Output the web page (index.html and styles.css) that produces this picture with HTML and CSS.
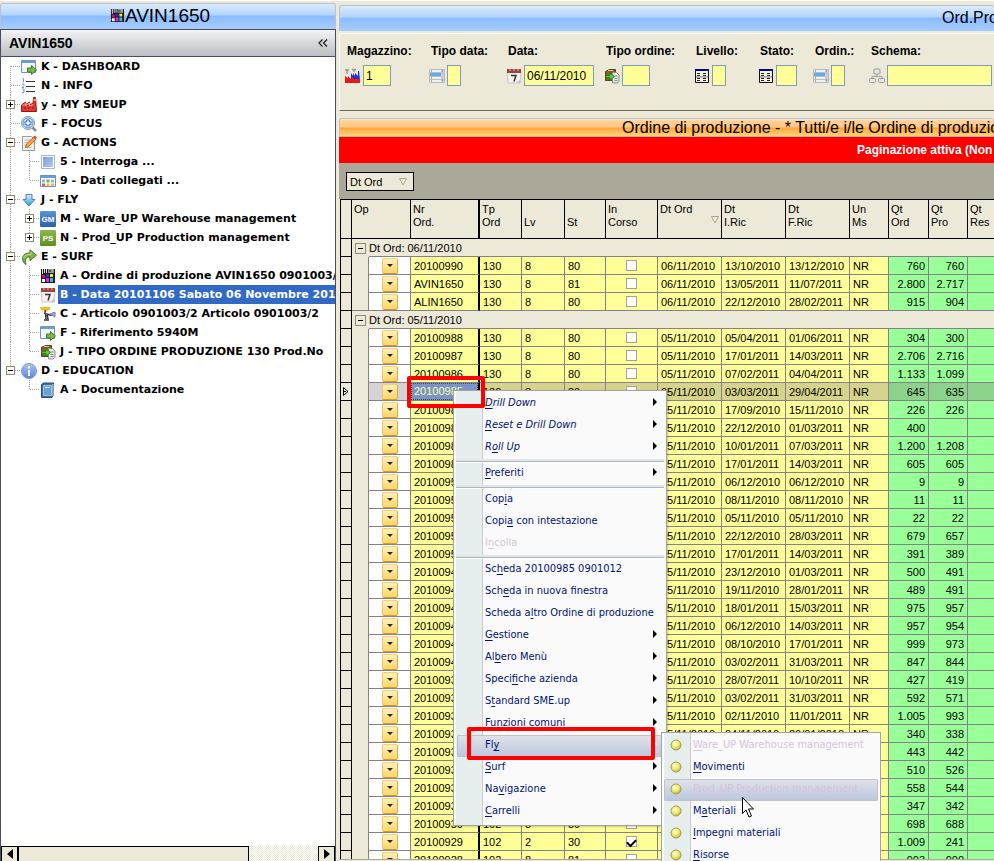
FILE: index.html
```html
<!DOCTYPE html>
<html lang="it">
<head>
<meta charset="utf-8">
<title>AVIN1650</title>
<link rel="stylesheet" href="styles.css">
</head>
<body>
<svg class="sprite" aria-hidden="true">
  <defs>
    <linearGradient id="g-blue" x1="0" y1="0" x2="1" y2="1"><stop offset="0" stop-color="#7b9fdd"/><stop offset="1" stop-color="#b4c9ee"/></linearGradient>
    <linearGradient id="g-gm" x1="0" y1="0" x2="0" y2="1"><stop offset="0" stop-color="#5a95d6"/><stop offset="1" stop-color="#2a62ac"/></linearGradient>
    <linearGradient id="g-ps" x1="0" y1="0" x2="0" y2="1"><stop offset="0" stop-color="#8db84a"/><stop offset="1" stop-color="#5d8f24"/></linearGradient>
    <radialGradient id="g-ball" cx=".4" cy=".35" r=".7"><stop offset="0" stop-color="#ffffc8"/><stop offset=".6" stop-color="#eee468"/><stop offset="1" stop-color="#b5a642"/></radialGradient>
    <linearGradient id="g-info" x1="0" y1="0" x2="0" y2="1"><stop offset="0" stop-color="#a9c4f3"/><stop offset="1" stop-color="#5b87d8"/></linearGradient>
    <linearGradient id="g-down" x1="0" y1="0" x2="0" y2="1"><stop offset="0" stop-color="#d5f2ff"/><stop offset="1" stop-color="#1f9be6"/></linearGradient>
  </defs>
  <symbol id="i-window" viewBox="0 0 16 16">
    <path d="M.5 1.500h14v12H.5z" fill="#f4f8fc" stroke="#7394c2"/><path d="M1 2h13v2H1z" fill="#6c9ce0"/>
    <path d="M6.500 9h4V6.500l5 4.500-5 4.500V13h-4z" fill="#7ab648" stroke="#3f7a22"/>
  </symbol>
  <symbol id="i-list" viewBox="0 0 16 16">
    <path d="M5 3.500h9M5 8.500h9M5 13.500h9" stroke="#333"/>
    <path d="M1.500 1l1-.5V4.500M1 6h2v1.500L1 9.500h2M1 11h2v1.500H2h1v2H1" fill="none" stroke="#6d9fe4"/>
  </symbol>
  <symbol id="i-factory" viewBox="0 0 16 16">
    <path d="M.5 14.500V8l4-3v2.500l4-2.500v2.500L12 6.500l.5-6h2l1 14z" fill="#dd3a33" stroke="#9c1414"/>
    <path d="M1.500 8.500l3-2v2l4-2.500v3l3.500-1.500" fill="none" stroke="#ffaaa0"/><path d="M3 11h2M7 11h2M11 11h2" stroke="#8c1111"/><path d="M12.500 3h2.500" stroke="#fff"/>
  </symbol>
  <symbol id="i-focus" viewBox="0 0 16 16">
    <path d="M11 11l4 4" stroke="#8a8a8a" stroke-width="2.500"/><circle cx="7" cy="7" r="6.500" fill="#dceafb" stroke="#8f98a3"/>
    <circle cx="7" cy="7" r="5" fill="none" stroke="#5e93d6"/><path d="M7 3.500v7M3.500 7h7" stroke="#3a74c4" stroke-width="3.500"/><path d="M7 4.500v5M4.500 7h5" stroke="#fff" stroke-width="1.500"/>
  </symbol>
  <symbol id="i-edit" viewBox="0 0 16 16">
    <path d="M1.500 1.500h9l3 3v11h-12z" fill="#f0f0ee" stroke="#9a9a98"/><path d="M3.500 5h6M3.500 7.500h5M3.500 10h3M3.500 12.500h7" stroke="#b9b9b7"/>
    <path d="M4.500 12.500l1-3.500L13 2l2 2.300-7.500 7.200z" fill="#f6a540" stroke="#b9691b"/><path d="M12 2l2-1.500 2 2-1.500 1.800z" fill="#e84a3c"/>
  </symbol>
  <symbol id="i-square" viewBox="0 0 16 16"><path d="M1.500 1.500h13v13h-13z" fill="#fff" stroke="#9db8e3"/><path d="M3 3h10v10H3z" fill="url(#g-blue)"/></symbol>
  <symbol id="i-grid" viewBox="0 0 16 16">
    <path d="M.5 2.500h15v11H.5z" fill="#fff" stroke="#6a90c8"/><path d="M1 3h14v2H1z" fill="#6c9ce0"/>
    <path d="M2 6.500h3v3H2z" fill="#8eb4e8"/><path d="M6.500 6.500h3v3h-3z" fill="#6fb24a"/><path d="M11 6.500h3v3h-3z" fill="#8eb4e8"/><path d="M2 10.500h3v2.500H2z" fill="#e25b45"/><path d="M6.500 10.500h3v2.500h-3zM11 10.500h3v2.500h-3z" fill="#f1b552"/>
  </symbol>
  <symbol id="i-down" viewBox="0 0 16 16"><path d="M5 2.500h6v5h3L8 14 2 7.500h3z" fill="url(#g-down)" stroke="#5f7fa8"/></symbol>
  <symbol id="i-gm" viewBox="0 0 16 16"><rect width="16" height="16" rx="1" fill="url(#g-gm)"/><text x="8" y="11" class="badge">GM</text></symbol>
  <symbol id="i-ps" viewBox="0 0 16 16"><rect width="16" height="16" rx="1" fill="url(#g-ps)"/><text x="8" y="11" class="badge">PS</text></symbol>
  <symbol id="i-surf" viewBox="0 0 16 16"><path d="M5 15.500C-.5 12 .5 3.500 9 4V.8l6.500 5.400L9 11.500V8C5.500 7.500 3.500 10 5 15.500z" fill="#83b544" stroke="#44761c"/><path d="M2.500 9C3.500 6 6 5.200 10 5.500V3" fill="none" stroke="#c7e39b"/></symbol>
  <symbol id="i-order" viewBox="0 0 16 16">
    <path d="M1 1h14v14H1z" fill="#1a1a1a"/><path d="M2 1h1v5H2zM4 1h1v4H4zM6 1h1v4H6z" fill="#ddd"/><path d="M8 1h6v4H8z" fill="#9a9a9a"/><path d="M9 2h2v2H9z" fill="#555"/>
    <path d="M2 7h3v3H2z" fill="#c8106c"/><path d="M6 6h3v3H6z" fill="#2033e0"/><path d="M10 6h3v3h-3z" fill="#fff200"/><path d="M2 11h3v3H2z" fill="#fff"/><path d="M6 10h3v4H6z" fill="#ff1ae0"/><path d="M10 10h3v4h-3z" fill="#19c9e8"/>
  </symbol>
  <symbol id="i-date" viewBox="0 0 16 16">
    <path d="M1 3h14l-1 12H2z" fill="#f4f1ef" stroke="#d0c8c4"/><path d="M1 1h14v4H1z" fill="#a04038"/><path d="M3 2h2M7 2h2M11 2h2" stroke="#e5bcb6"/><path d="M5 7.500h5L8 13.500" fill="none" stroke="#333" stroke-width="1.500"/><path d="M10 15l5-4v4z" fill="#c9c4c0"/>
  </symbol>
  <symbol id="i-item" viewBox="0 0 16 16">
    <path d="M0 1h10v3H8L7 6 5 4H3L2 6z" fill="#f3bc22"/><path d="M5 4l1 9M4 7l6 2h4M4 14h5M7 8l1 5" stroke="#333" stroke-width="1.500" fill="none"/><path d="M10 8l5-2v5zM5 6l2 3" fill="#97a9d9" stroke="#6d80bb"/>
  </symbol>
  <symbol id="i-type" viewBox="0 0 16 16">
    <path d="M1.500 3.500l4-2h6v11h-10z" fill="#8b5b22" stroke="#5e3f1c"/><path d="M4 2.500h5" stroke="#d9c9a0"/><path d="M8.500 4.500h4l2.500 2.500v6.500L13 15H8.500z" fill="#e8e8e6" stroke="#8b8b89"/><path d="M10.500 8h3M10.500 10.500h3M10.500 12.500h3" stroke="#888"/>
    <path d="M2 7.500h4V5l4.500 3.500L6 12V9.500H2z" fill="#4ad838" stroke="#1f8a1e"/>
  </symbol>
  <symbol id="i-info" viewBox="0 0 16 16"><circle cx="8" cy="8" r="7.500" fill="url(#g-info)" stroke="#7d9dd8"/><path d="M8 3v2.500M8 7v6" stroke="#fff" stroke-width="2"/></symbol>
  <symbol id="i-book" viewBox="0 0 16 16"><path d="M1.500 2.500l2-1.500h10v12l-1.500 2.500H1.500z" fill="#39729f" stroke="#24506f"/><path d="M3.500 3.500h8v10h-8z" fill="#6c9fd0" stroke="#9cc1e2"/><path d="M5 5.500h5" stroke="#d6e6f4"/><path d="M13 2v12" stroke="#dfe8f1"/></symbol>
  <symbol id="i-plant" viewBox="0 0 16 16"><path d="M6 12V5l2 3V5l2 3V5l3 3V3h1l1 9z" fill="#1636d2"/><path d="M0 15V8l3 2V8l3 3 2-2 1 2h6v4z" fill="#e81818"/><path d="M0 2h4M7 1.500h4M2 1v5M9 1v3" stroke="#999" stroke-width="1.500"/></symbol>
  <symbol id="i-combo" viewBox="0 0 16 16"><path d="M.5 1.500h15v13H.5z" fill="#f1f1f1" stroke="#b8bdc2"/><path d="M1 5h11v3H1z" fill="#5faee8"/><path d="M1 4.500h11M1 8.500h11M1 11.500h11" stroke="#b7bec4"/><path d="M12 2h3v12h-3z" fill="#c8ccd0"/><path d="M13 3h1M13 12h1M2 3h1M2 10h1M2 13h1" stroke="#666"/></symbol>
  <symbol id="i-table" viewBox="0 0 16 16"><path d="M1.500 1.500h13v13h-13z" fill="#f4f2e8" stroke="#111"/><path d="M1 1h14v2H1z" fill="#000a8c"/><path d="M3 5.500h4M9 5.500h4M3 7.500h4M9 7.500h4M3 10.500h4M9 10.500h4M3 12.500h4M9 12.500h4" stroke="#222" stroke-dasharray="3 1"/><path d="M2 9h12" stroke="#777"/></symbol>
  <symbol id="i-schema" viewBox="0 0 16 16"><path d="M8 6v3M3 11V8.500h10V11" fill="none" stroke="#a3a3a3"/><g fill="#e6e6e6" stroke="#9a9a9a"><rect x="5" y="1" width="6" height="5" rx="1"/><rect x=".5" y="10.500" width="6" height="4" rx="1"/><rect x="9.500" y="10.500" width="6" height="4" rx="1"/></g></symbol>
  <symbol id="i-ball" viewBox="0 0 12 12"><circle cx="6" cy="6" r="5" fill="url(#g-ball)" stroke="#a39c52"/></symbol>
</svg>

<aside class="sidebar">
  <header class="caption caption-object"><svg class="caption-icon"><use href="#i-order"/></svg><span>AVIN1650</span></header>
  <section class="panel">
    <div class="panel-title"><h2>AVIN1650</h2><button class="collapse" type="button" aria-label="Comprimi"><svg viewBox="0 0 10 8"><path d="M4.500 .5L1 4l3.500 3.500M9 .5L5.500 4 9 7.500" /></svg></button></div>
    <ul class="tree">
      <li><i class="guide start"></i><svg class="icon"><use href="#i-window"/></svg><span>K - DASHBOARD</span></li>
      <li><i class="guide tee"></i><svg class="icon"><use href="#i-list"/></svg><span>N - INFO</span></li>
      <li><i class="guide tee"><button class="box plus" type="button" aria-label="Espandi"></button></i><svg class="icon"><use href="#i-factory"/></svg><span>y - MY SMEUP</span></li>
      <li><i class="guide tee"></i><svg class="icon"><use href="#i-focus"/></svg><span>F - FOCUS</span></li>
      <li><i class="guide tee"><button class="box" type="button" aria-label="Comprimi"></button></i><svg class="icon"><use href="#i-edit"/></svg><span>G - ACTIONS</span></li>
      <li><i class="guide line"></i><i class="guide tee"></i><svg class="icon"><use href="#i-square"/></svg><span>5 - Interroga ...</span></li>
      <li><i class="guide line"></i><i class="guide end"></i><svg class="icon"><use href="#i-grid"/></svg><span>9 - Dati collegati ...</span></li>
      <li><i class="guide tee"><button class="box" type="button" aria-label="Comprimi"></button></i><svg class="icon"><use href="#i-down"/></svg><span>J - FLY</span></li>
      <li><i class="guide line"></i><i class="guide tee"><button class="box plus" type="button" aria-label="Espandi"></button></i><svg class="icon"><use href="#i-gm"/></svg><span>M - Ware_UP Warehouse management</span></li>
      <li><i class="guide line"></i><i class="guide end"><button class="box plus" type="button" aria-label="Espandi"></button></i><svg class="icon"><use href="#i-ps"/></svg><span>N - Prod_UP Production management</span></li>
      <li><i class="guide tee"><button class="box" type="button" aria-label="Comprimi"></button></i><svg class="icon"><use href="#i-surf"/></svg><span>E - SURF</span></li>
      <li><i class="guide line"></i><i class="guide tee"></i><svg class="icon"><use href="#i-order"/></svg><span>A - Ordine di produzione AVIN1650 0901003/2</span></li>
      <li class="selected"><i class="guide line"></i><i class="guide tee"></i><svg class="icon"><use href="#i-date"/></svg><span>B - Data 20101106 Sabato 06 Novembre 2010</span></li>
      <li><i class="guide line"></i><i class="guide tee"></i><svg class="icon"><use href="#i-item"/></svg><span>C - Articolo 0901003/2 Articolo 0901003/2</span></li>
      <li><i class="guide line"></i><i class="guide tee"></i><svg class="icon"><use href="#i-window"/></svg><span>F - Riferimento 5940M</span></li>
      <li><i class="guide line"></i><i class="guide end"></i><svg class="icon"><use href="#i-type"/></svg><span>J - TIPO ORDINE PRODUZIONE 130 Prod.No</span></li>
      <li><i class="guide end"><button class="box" type="button" aria-label="Comprimi"></button></i><svg class="icon"><use href="#i-info"/></svg><span>D - EDUCATION</span></li>
      <li><i class="guide"></i><i class="guide end"></i><svg class="icon"><use href="#i-book"/></svg><span>A - Documentazione</span></li>
    </ul>
    <div class="scrollbar">
      <button type="button" aria-label="Scorri a sinistra"><svg viewBox="0 0 6 10"><path d="M6 0v10L0 5z"/></svg></button>
      <div class="thumb"></div><div class="track"></div>
      <button type="button" aria-label="Scorri a destra"><svg viewBox="0 0 6 10"><path d="M0 0v10l6-5z"/></svg></button>
    </div>
  </section>
</aside>

<main class="main">
  <header class="caption caption-main"><span>Ord.Prod.</span></header>
  <form class="filters">
    <div class="field"><label for="f-mag">Magazzino:</label><div><svg class="icon"><use href="#i-plant"/></svg><input id="f-mag" class="w28" value="1"></div></div>
    <div class="field"><label for="f-tdata">Tipo data:</label><div><svg class="icon"><use href="#i-combo"/></svg><input id="f-tdata" class="w14"></div></div>
    <div class="field"><label for="f-data">Data:</label><div><svg class="icon"><use href="#i-date"/></svg><input id="f-data" class="w70" value="06/11/2010"></div></div>
    <div class="field"><label for="f-tord">Tipo ordine:</label><div><svg class="icon"><use href="#i-type"/></svg><input id="f-tord" class="w28"></div></div>
    <div class="field"><label for="f-liv">Livello:</label><div><svg class="icon"><use href="#i-table"/></svg><input id="f-liv" class="w14"></div></div>
    <div class="field"><label for="f-stato">Stato:</label><div><svg class="icon"><use href="#i-table"/></svg><input id="f-stato" class="w21"></div></div>
    <div class="field"><label for="f-ord">Ordin.:</label><div><svg class="icon"><use href="#i-combo"/></svg><input id="f-ord" class="w14"></div></div>
    <div class="field"><label for="f-schema">Schema:</label><div><svg class="icon"><use href="#i-schema"/></svg><input id="f-schema" class="w105"></div></div>
  </form>
  <header class="caption caption-list"><span>Ordine di produzione - * Tutti/e i/le Ordine di produzione</span></header>
  <p class="notice">Paginazione attiva (Non</p>
  <div class="groupbar"><button type="button">Dt Ord <svg class="sort" viewBox="0 0 8 8"><path d="M.5 .5h7L4 7z"/></svg></button></div>
  <div class="grid-wrap">
    <table class="grid">
      <colgroup><col class="c-ind"><col class="c-gap"><col class="c-op"><col class="c-nr"><col class="c-tp"><col class="c-lv"><col class="c-st"><col class="c-in"><col class="c-dt"><col class="c-dt"><col class="c-dt"><col class="c-un"><col class="c-qo"><col class="c-qp"><col class="c-qr"></colgroup>
      <thead><tr>
        <th class="ind"></th><th colspan="2">Op</th><th class="nr">Nr<br>Ord.</th><th>Tp<br>Ord</th><th><br>Lv</th><th><br>St</th><th>In<br>Corso</th>
        <th>Dt Ord<svg class="sort" viewBox="0 0 8 8"><path d="M.5 .5h7L4 7z"/></svg></th><th>Dt<br>I.Ric</th><th>Dt<br>F.Ric</th><th>Un<br>Ms</th><th>Qt<br>Ord</th><th>Qt<br>Pro</th><th>Qt<br>Res</th>
      </tr></thead>
      <tbody id="rows"></tbody>
    </table>
  </div>
</main>

<ul class="menu context">
  <li class="em"><span><u>D</u>rill Down</span><b></b></li>
  <li class="em"><span><u>R</u>eset e Drill Down</span><b></b></li>
  <li class="em"><span>R<u>o</u>ll Up</span><b></b></li>
  <li class="sep"></li>
  <li><span><u>P</u>referiti</span><b></b></li>
  <li class="sep"></li>
  <li><span>Cop<u>i</u>a</span></li>
  <li><span>Copi<u>a</u> con intestazione</span></li>
  <li class="off"><span>I<u>n</u>colla</span></li>
  <li class="sep"></li>
  <li><span>Sc<u>h</u>eda 20100985 0901012</span></li>
  <li><span>Sch<u>e</u>da in nuova finestra</span></li>
  <li><span>Scheda a<u>l</u>tro Ordine di produzione</span></li>
  <li><span><u>G</u>estione</span><b></b></li>
  <li><span>Al<u>b</u>ero Menù</span><b></b></li>
  <li><span>Speci<u>f</u>iche azienda</span><b></b></li>
  <li><span>S<u>t</u>andard SME.up</span><b></b></li>
  <li><span>F<u>u</u>nzioni comuni</span><b></b></li>
  <li class="hot"><span>Fl<u>y</u></span><b></b>
    <ul class="menu submenu">
      <li class="off"><svg class="ball"><use href="#i-ball"/></svg><span><u>W</u>are_UP Warehouse management</span></li>
      <li><svg class="ball"><use href="#i-ball"/></svg><span><u>M</u>ovimenti</span></li>
      <li class="off hot"><svg class="ball"><use href="#i-ball"/></svg><span><u>P</u>rod_UP Production management</span></li>
      <li><svg class="ball"><use href="#i-ball"/></svg><span>M<u>a</u>teriali</span></li>
      <li><svg class="ball"><use href="#i-ball"/></svg><span><u>I</u>mpegni materiali</span></li>
      <li><svg class="ball"><use href="#i-ball"/></svg><span><u>R</u>isorse</span></li>
      <li></li>
    </ul>
  </li>
  <li><span><u>S</u>urf</span><b></b></li>
  <li><span>Na<u>v</u>igazione</span><b></b></li>
  <li><span><u>C</u>arrelli</span><b></b></li>
</ul>
<div class="mark mark-order"></div>
<div class="mark mark-fly"></div>
<svg class="pointer" viewBox="0 0 13 21"><path d="M.5 .5v16l3.500-3.500 3 7 2.500-1-3-7h5z" fill="#fff" stroke="#000"/></svg>
<script src="grid.js"></script>
</body>
</html>
```
FILE: grid.js
```js
// number, type, level, state, due in, due out, ordered, produced, [in progress]
const groups = [
  ["06/11/2010", `20100990 130 8 80 13/10/2010 13/12/2010 760 760
AVIN1650 130 8 81 13/05/2011 11/07/2011 2.800 2.717
ALIN1650 130 8 80 22/12/2010 28/02/2011 915 904`],
  ["05/11/2010", `20100988 130 8 80 05/04/2011 01/06/2011 304 300
20100987 130 8 80 17/01/2011 14/03/2011 2.706 2.716
20100986 130 8 80 07/02/2011 04/04/2011 1.133 1.099
20100985 130 8 80 03/03/2011 29/04/2011 645 635
20100984 130 8 80 17/09/2010 15/11/2010 226 226
20100983 130 8 80 22/12/2010 01/03/2011 400 -
20100982 130 8 80 10/01/2011 07/03/2011 1.200 1.208
20100981 130 8 80 17/01/2011 14/03/2011 605 605
20100959 130 8 80 06/12/2010 06/12/2010 9 9
20100958 130 8 80 08/11/2010 08/11/2010 11 11
20100957 130 8 80 05/11/2010 05/11/2010 22 22
20100956 130 8 80 22/12/2010 28/03/2011 679 657
20100955 130 8 80 17/01/2011 14/03/2011 391 389
20100949 130 8 80 23/12/2010 01/03/2011 500 491
20100948 130 8 80 19/11/2010 28/01/2011 489 491
20100947 130 8 80 18/01/2011 15/03/2011 975 957
20100946 130 8 80 06/12/2010 14/03/2011 957 954
20100945 130 8 80 08/10/2010 17/01/2011 999 973
20100944 130 8 80 03/02/2011 31/03/2011 847 844
20100939 130 8 80 28/07/2011 10/10/2011 427 419
20100938 130 8 80 03/02/2011 31/03/2011 592 571
20100937 130 8 80 02/11/2010 11/01/2011 1.005 993
20100936 130 8 80 04/11/2010 20/01/2010 340 338
20100935 130 8 80 04/11/2010 20/01/2010 443 442
20100934 130 8 80 04/11/2010 20/01/2010 510 526
20100933 130 8 80 04/11/2010 20/01/2010 558 544
20100932 130 8 80 04/11/2010 20/01/2010 347 342
20100930 102 8 80 04/11/2010 20/01/2010 698 688
20100929 102 2 30 04/11/2010 20/01/2010 1.009 241 x
20100928 102 8 81 04/11/2010 20/01/2010 903 900`]
];
const current = "20100985";
const html = groups.map(([date, text]) => {
  const lines = text.split("\n");
  const head = `<tr class="group"><td class="ind"></td><td class="gap"><button type="button" class="box" aria-label="Comprimi"></button></td><td colspan="13">Dt Ord: ${date}</td></tr>`;
  return head + lines.map((line, i) => {
    const [nr, tp, lv, st, from, to, qo, qp, open] = line.split(" ");
    const cls = [nr === current ? "current" : "", i === lines.length - 1 ? "last" : ""].join(" ").trim();
    return `<tr class="${cls}"><td class="ind">${nr === current ? '<svg viewBox="0 0 6 9"><path d="M.5 .5L5 4.500.5 8.500zM0 4.500h3"/></svg>' : ""}</td><td class="gap"></td>` +
      `<td class="op"><button type="button" class="drop" aria-label="Opzioni ${nr}"></button></td><td class="nr"><span>${nr}</span></td>` +
      `<td>${tp}</td><td>${lv}</td><td>${st}</td><td class="chk"><input type="checkbox" aria-label="In corso ${nr}"${open ? " checked" : ""}></td>` +
      `<td>${date}</td><td>${from}</td><td>${to}</td><td>NR</td><td class="qty">${qo}</td><td class="qty">${qp === "-" ? "" : qp}</td><td class="qty"></td></tr>`;
  }).join("");
}).join("");
document.getElementById("rows").innerHTML = html;
```
FILE: styles.css
```css
* { box-sizing: border-box; }
body {
  margin: 0;
  height: 100vh;
  display: flex;
  gap: 3px;
  overflow: hidden;
  position: relative;
  background: #ece9d8;
  border-top: 1px solid #fff;
  font: 11px "Liberation Sans", Arial, sans-serif;
  color: #000;
}
button, input { font: inherit; color: inherit; margin: 0; padding: 0; border-radius: 0; }
ul { list-style: none; margin: 0; padding: 0; }
.sprite { position: absolute; width: 0; height: 0; }
.badge { font: bold 8px "Liberation Sans", sans-serif; fill: #fff; text-anchor: middle; }
.icon { width: 16px; height: 16px; flex: none; }

/* captions */
.caption {
  flex: none;
  display: flex;
  align-items: center;
  white-space: nowrap;
  overflow: hidden;
  height: 26px;
  border: 1px solid #bcc0c8;
  border-bottom: 2px solid #a5caff;
  border-radius: 3px 3px 0 0;
  background: linear-gradient(#dcebff 0, #b2d4ff 48%, #8cbcff 52%, #a2cbff 100%);
  font-size: 16px;
}
.caption-object { justify-content: center; padding-right: 16px; font-size: 19px; }
.caption-icon { width: 15px; height: 15px; }
.caption-main { padding-left: 602px; border-right: 0; }
.caption-list {
  height: 19px;
  margin-top: 7px;
  padding-left: 282px;
  border-right: 0;
  border-bottom: 1px solid #c0b8a0;
  background: linear-gradient(#fff0cc 0, #ffd29a 10%, #ffc687 48%, #ffa634 52%, #ffc468 85%, #ffd97c 100%);
}

/* sidebar */
.sidebar { flex: 0 0 336px; min-width: 0; display: flex; flex-direction: column; padding-top: 2px; }
.panel { flex: 1; min-height: 0; display: flex; flex-direction: column; border: 1px solid #4a4d5e; border-bottom: 0; background: #fff; }
.panel-title {
  flex: none;
  height: 27px;
  display: flex;
  align-items: center;
  justify-content: space-between;
  padding: 0 7px 0 8px;
  border-bottom: 1px solid #4a4d5e;
  background: linear-gradient(#f4f4f4, #d6d9dc 50%, #bbbfc3);
}
.panel-title h2 { margin: 0; font-size: 14px; }
.collapse { width: 10px; height: 8px; border: 0; background: none; display: flex; }
.collapse path { fill: none; stroke: #222; stroke-width: 1.300; }
.tree { flex: 1; min-height: 0; overflow: hidden; font: bold 11px "DejaVu Sans", Verdana, sans-serif; }
.tree li { display: flex; height: 19px; align-items: center; white-space: nowrap; }
.tree .icon { margin: 0 2px 0 1px; }
.tree span { flex: 1; padding-left: 2px; line-height: 19px; overflow: hidden; }
.selected span { background: #316ac5; color: #fff; }
.guide {
  --v: repeating-linear-gradient(#a9a594 0 1px, #fff 1px 2px);
  --h: repeating-linear-gradient(90deg, #a9a594 0 1px, #fff 1px 2px);
  flex: none;
  width: 19px;
  height: 19px;
  display: grid;
  place-items: center;
  background-repeat: no-repeat;
}
.line { background-image: var(--v); background-size: 1px 19px; background-position: 9px 0; }
.start { background-image: var(--v), var(--h); background-size: 1px 10px, 9px 1px; background-position: 9px 9px, 10px 9px; }
.tee { background-image: var(--v), var(--h); background-size: 1px 19px, 9px 1px; background-position: 9px 0, 10px 9px; }
.end { background-image: var(--v), var(--h); background-size: 1px 10px, 9px 1px; background-position: 9px 0, 10px 9px; }
.box {
  display: block;
  width: 9px;
  height: 9px;
  border: 1px solid #8e8b7b;
  background: linear-gradient(#000, #000) center / 5px 1px no-repeat, #fff;
}
.plus { background: linear-gradient(#000, #000) center / 5px 1px no-repeat, linear-gradient(#000, #000) center / 1px 5px no-repeat, #fff; }
.scrollbar { flex: none; display: flex; height: 15px; }
.scrollbar button, .thumb { background: #ece9d8; border: 1px solid #000; border-bottom: 0; }
.scrollbar button { width: 17px; display: grid; place-items: center; }
.scrollbar svg { width: 6px; height: 10px; }
.thumb { flex: 231; }
.track { flex: 69; background: repeating-conic-gradient(#ece9d8 0 25%, #fff 0 50%) 0 0 / 2px 2px; }

/* main area */
.main { flex: 1; min-width: 0; display: flex; flex-direction: column; padding-top: 4px; }
.filters {
  flex: none;
  display: grid;
  grid-template-columns: 84px 77px 98px 90px 64px 55px 56px 1fr;
  margin-top: 2px;
  padding: 9px 0 24px 5px;
  border: 1px solid #fff;
  border-width: 1px 0 0 1px;
  border-bottom: 1px solid #6f6c62;
  font-size: 12px;
}
.field label { display: block; padding-left: 2px; margin-bottom: 6px; line-height: 16px; font-weight: bold; white-space: nowrap; }
.field div { display: flex; align-items: center; gap: 2px; }
.field input { height: 21px; padding: 0 2px; border: 1px solid #7f9db9; background: #ffff99; outline: 0; }
.w14 { width: 14px; } .w21 { width: 21px; } .w28 { width: 28px; } .w70 { width: 70px; } .w105 { width: 105px; }
.notice {
  flex: none;
  margin: 0;
  padding-left: 518px;
  height: 26px;
  line-height: 26px;
  background: #f00;
  color: #fff;
  font-size: 12px;
  font-weight: bold;
  white-space: nowrap;
  overflow: hidden;
}
.groupbar { flex: none; height: 36px; padding: 9px 7px; background: #aca899; }
.groupbar button {
  display: flex;
  align-items: center;
  justify-content: space-between;
  width: 68px;
  height: 19px;
  padding: 0 6px 0 3px;
  border: 1px solid #000;
  background: #ece9d8;
}
.sort { width: 8px; height: 8px; }
.sort path { fill: none; stroke: #aca899; }

/* data grid */
.grid-wrap { flex: 1; min-height: 0; overflow: hidden; margin-bottom: 1px; padding-left: 1px; border-bottom: 1px solid #aca899; }
.grid { width: 676px; table-layout: fixed; border-collapse: separate; border-spacing: 0; }
.c-ind { width: 12px; } .c-gap { width: 17px; } .c-op { width: 42px; } .c-nr { width: 69px; }
.c-tp { width: 42px; } .c-lv { width: 43px; } .c-st { width: 41px; } .c-in { width: 52px; }
.c-dt { width: 64px; } .c-un { width: 39px; } .c-qo { width: 40px; } .c-qp { width: 39px; } .c-qr { width: 48px; }
.grid th {
  height: 40px;
  padding: 3px 2px;
  border: 1px solid #000;
  border-left: 0;
  vertical-align: top;
  text-align: left;
  font-weight: normal;
  line-height: 13px;
}
.grid th .sort { display: block; margin: 0 0 0 auto; }
.grid td {
  height: 18px;
  padding: 1px 0 0 3px;
  border: 1px solid #848284;
  border-width: 0 1px 1px 0;
  background: #ffff99;
  line-height: 16px;
  white-space: nowrap;
}
.grid td.ind { padding: 0 0 0 2px; }
.grid .ind { border-color: #000; border-left: 1px solid #000; background: #ece9d8; }
.ind svg { display: block; width: 6px; height: 9px; }
.ind path { fill: none; stroke: #000; }
.grid td.gap { padding: 0; background: #ece9d8; border-bottom: 0; }
.grid .last td.gap { border-bottom: 1px solid #848284; }
.grid .group td { background: #ece9d8; padding: 0; }
.grid .group td.gap { border-right: 0; padding-left: 3px; }
.gap .box { width: 11px; height: 11px; background-color: #ece9d8; }
.grid td.op { padding: 0; background: #fff; }
.drop {
  display: block;
  width: 16px;
  height: 16px;
  margin: 0 auto;
  border: 1px solid #d9a93c;
  border-color: #f0cf7c #d9a93c #cf9c35 #ecc766;
  border-radius: 2px;
  background: linear-gradient(#fff0bb, #ffe391 50%, #fdd56a);
  display: grid;
  place-items: center;
}
.drop::before { content: ""; border: 3px solid transparent; border-top: 3px solid #222; border-bottom: 0; }
.grid .nr { border-right: 2px solid #000; }
.grid td.chk { padding: 0; }
.chk input { appearance: none; display: grid; place-items: center; width: 11px; height: 11px; margin: 0 auto; border: 1px solid #a5a294; background: #fff; }
.chk input:checked::before { content: ""; width: 7px; height: 4px; border: 2px solid #000; border-width: 0 0 2px 2px; transform: rotate(-45deg); }
.grid td.qty { padding: 1px 3px 0 0; text-align: right; background: #99ff99; }
.grid .current td { background: #d6d38c; }
.grid .current td.qty { background: #8cd28c; }
.grid .current td.op { background: #d6d3d6; }
.grid .current td.gap, .grid .current td.ind { background: #ece9d8; }
.grid .current td.nr { padding: 0; background: #7b94c6; color: #ffff99; }
.current .nr span { display: block; padding-left: 2px; line-height: 15px; border: 1px dotted #37456b; }

/* menus */
.menu {
  position: absolute;
  padding: 2px;
  border: 1px solid #a5a29a;
  background: linear-gradient(90deg, #fff 2px, #e7eeee 2px 28px, #c8cccc 28px 29px, #fafafa 29px);
  color: #00146e;
  font: 11px "DejaVu Sans Condensed", Tahoma, sans-serif;
}
.menu li {
  position: relative;
  display: flex;
  justify-content: space-between;
  height: 22px;
  padding: 0 7px 4px 29px;
  white-space: nowrap;
  line-height: 19px;
}
.menu u { text-underline-offset: 2px; }
.menu .em > span { font-style: italic; }
.menu .off > span { color: #d8c2dc; }
.menu b { align-self: center; border: 4px solid transparent; border-left-color: #000; border-right: 0; }
.menu .sep { height: 4px; padding: 0; border-top: 2px solid #dee7ed; border-bottom: 1px solid #fff; background: #b1b6b9; }
.menu .hot { margin-left: 1px; padding-left: 28px; border-radius: 2px; background: linear-gradient(#e0e4ea, #bbc5de); box-shadow: inset 0 0 0 1px #c2c3c8; }
.menu .hot > b { border-left-color: #fff; }
.context { left: 453px; top: 389px; width: 214px; box-shadow: 1px 1px 2px #0003; }
.submenu { left: 204px; top: -3px; width: 220px; z-index: 1; }
.submenu li { justify-content: flex-start; }
.submenu li.hot { margin-left: 0; padding-left: 29px; }
.submenu .ball { position: absolute; left: 6px; top: 4px; width: 12px; height: 12px; }

.mark { position: absolute; border: 4px solid #f00; border-radius: 2px; z-index: 3; }
.mark-order { left: 407px; top: 375px; width: 78px; height: 32px; }
.mark-fly { left: 467px; top: 726px; width: 188px; height: 33px; }
.pointer { position: absolute; left: 742px; top: 796px; width: 13px; height: 21px; z-index: 4; }
```
